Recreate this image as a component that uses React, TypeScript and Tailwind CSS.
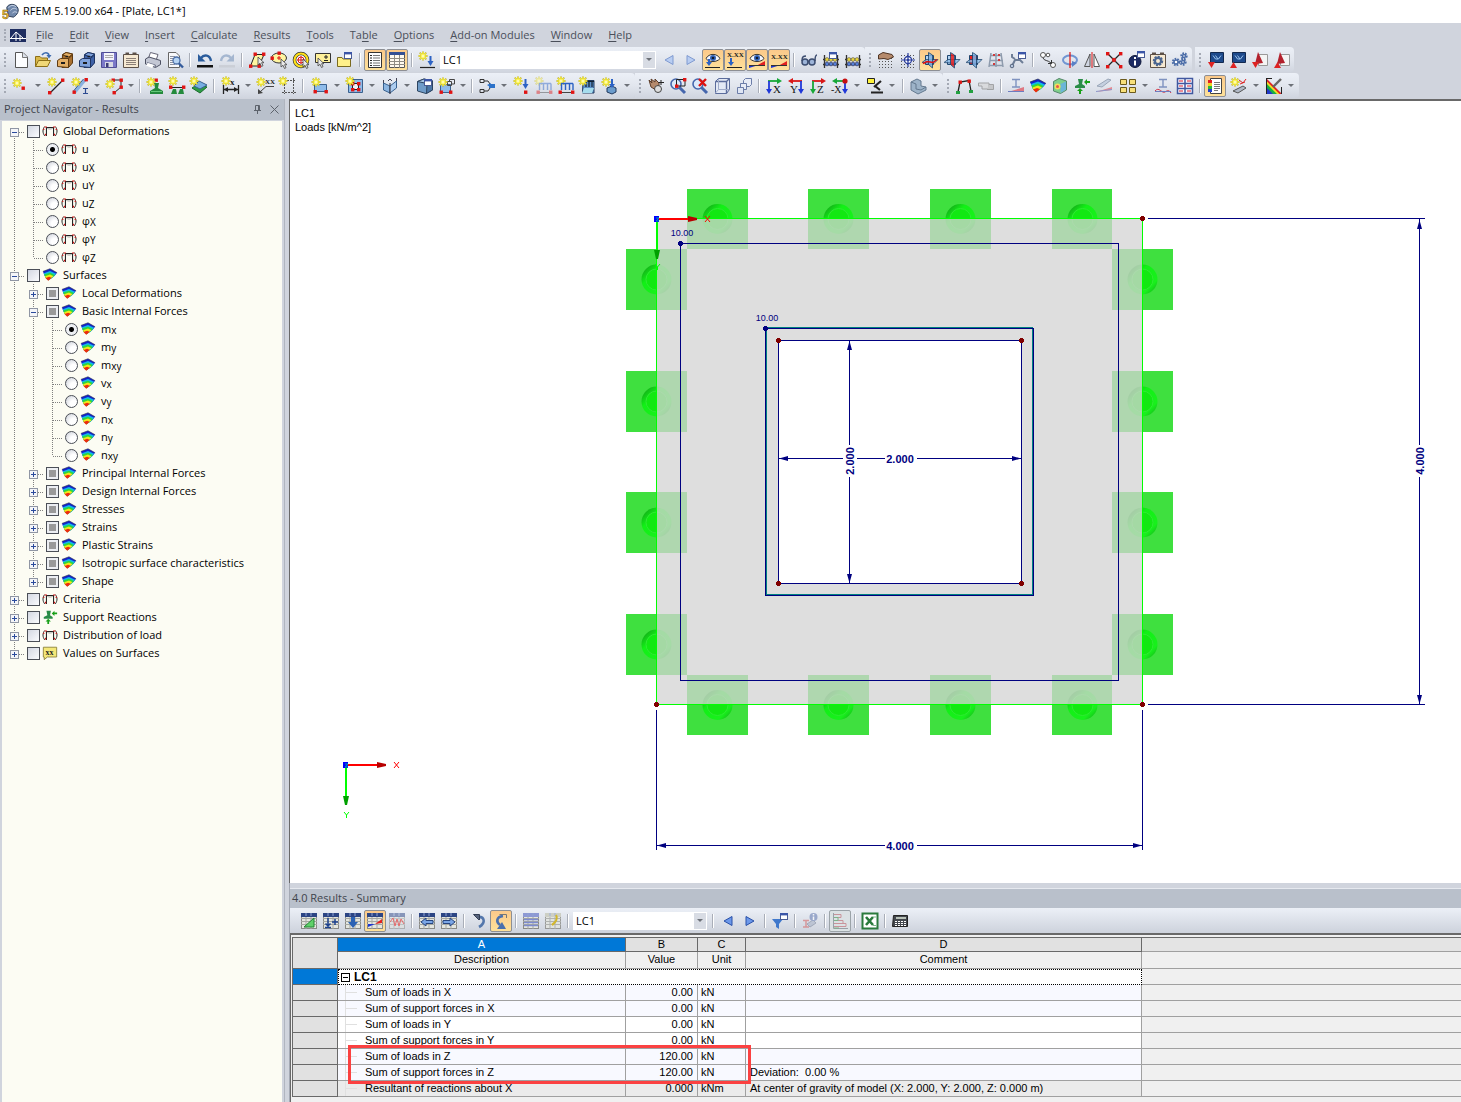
import React from "react";

type PProps = { d: string; f?: string; s?: string; w?: number; o?: number };
const P = ({ d, f = "none", s = "#333333", w = 1, o = 1 }: PProps) => (
  <path d={d} fill={f} stroke={s} strokeWidth={w} opacity={o} />
);
const F = ({ d, f = "#333333", o = 1 }: { d: string; f?: string; o?: number }) => <path d={d} fill={f} opacity={o} />;
const Star = ({ x = 5, y = 5 }: { x?: number; y?: number }) => (
  <g transform={`translate(${x} ${y})`}>
    <path d="M0-4.5V4.5M-4.5 0H4.5M-3.3-3.3 3.3 3.3M3.3-3.3-3.3 3.3" stroke="#c4b830" strokeWidth="1.8" />
    <path d="M0-4V4M-4 0H4M-2.6-2.6 2.6 2.6M2.6-2.6-2.6 2.6" stroke="#fff640" strokeWidth="1.2" />
    <circle r="1.6" fill="#fffbb0" />
  </g>
);
const Dot = ({ x, y }: { x: number; y: number }) => <rect x={x - 1.5} y={y - 1.5} width="3.4" height="3.4" fill="#e01414" />;
const Win = ({ x = 10, y = 1 }: { x?: number; y?: number }) => (
  <g transform={`translate(${x} ${y})`}>
    <rect x=".5" y=".5" width="7" height="6" fill="#fff" stroke="#4a5c94" />
    <path d="M0 1.2H8" stroke="#3b56a8" strokeWidth="2.4" />
  </g>
);
const Cursor = ({ x, y }: { x: number; y: number }) => (
  <path transform={`translate(${x} ${y})`} d="M0 0V8L2 6.3 3.5 9.5 5 8.7 3.6 5.7H6Z" fill="#e8e8e8" stroke="#444" strokeWidth=".8" />
);
const Grid = ({ head = "#2c4584", o = 1 }: { head?: string; o?: number }) => (
  <g opacity={o}>
    <rect x="1.5" y="1.5" width="15" height="15" fill="#e4e6e0" stroke="#8a8a86" />
    <path d="M1 6.5H17M1 9.5H17M1 12.5H17M6 3V17M11 3V17" stroke="#a5a7a2" fill="none" />
    <rect x="1" y="1" width="16" height="4" fill={head} />
    <path d="M6 1V4M11 1V4" stroke="#8fa3d3" />
  </g>
);
const Cabinet = ({ a, b, c }: { a: string; b: string; c: string }) => (
  <>
    <P d="M6.5 3.500 10 1.500 16.500 3V11L12 16.500H6Z" f={b} s={c} />
    <P d="M6.500 4 10 1.500 16.500 3 13 6Z" f={a} s={c} />
    <P d="M1.500 9.500 4.500 7.500H12.500V16.500L1.500 15.500Z" f={a} s={c} />
    <P d="M12.500 7.500 16.500 4V12L12.500 16.500Z" f={b} s={c} />
    <P d="M5 12H9" w={2} s="#1c1c1c" />
    <P d="M9.500 5.500H12" w={1.400} s="#1c1c1c" />
  </>
);
const Tiny = ({ x, y, t, c = "#222", size = 9 }: { x: number; y: number; t: string; c?: string; size?: number }) => (
  <text x={x} y={y} fontSize={size} fontWeight="700" fontFamily="Liberation Serif, serif" fill={c}>{t}</text>
);
const LoadFrame = ({ o = 1 }: { o?: number }) => (
  <g opacity={o}>
    <Star x={4} y={4} />
    <P d="M4.500 13V6.500H16M8.500 6.500V13M12.500 6.500V13M16 6.500V13" s="#2c62c4" w={1.400} />
    <P d="M2 15.500H17" s="#444" />
    <Dot x={3} y={15} />
    <Dot x={15.5} y={15} />
  </g>
);
const Surf = () => (
  <>
    <F d="M1 5 9 2 17 6.500 14 10 7 15 4 12Z" f="#1322cf" />
    <F d="M2 7 9 4.500 16 7.500 12 12 7 15 4 12Z" f="#12b9e6" />
    <F d="M2.500 8.500 9 6.500 14.500 9 11 12.500 7 15 4 12Z" f="#2fd83a" />
    <F d="M3.500 10.500 9 8.500 13 10.500 7 15 4 12Z" f="#f3e71a" />
    <F d="M4 12.500 8 11 11 12 7 15.500Z" f="#ee2a10" />
    <P d="M1 5 9 2 17 6.500" s="#26304a" w={0.7} />
  </>
);
const FrameIcon = () => (
  <>
    <P d="M5 14.500V5H13V14.500" w={1.200} s="#222" />
    <P d="M3 14.500C.5 11 .5 7 3 4M15 14.500C17.500 11 17.500 7 15 4" s="#222" w={1.100} />
    <P d="M3 4.500H5.500M12.500 4.500H15M2 6.500V8M16 6.500V8M4 12V14M14 12V14" s="#df1010" w={1.300} />
    <P d="M6 6C8 7 10 7 12 6" s="#999" />
  </>
);
const Box = ({ f = "#6f9cc9" }: { f?: string }) => (
  <>
    <P d="M1.500 4.500 8 2 16.500 4V13L10 16.500 1.500 14Z" f={f} s="#2d4561" />
    <P d="M1.500 4.500 8 2 16.500 4 11 6.500Z" f="#a9c8e6" s="#2d4561" />
    <P d="M11 6.500 16.500 4V13L10.500 16.500Z" f="#4a76a8" s="#2d4561" />
  </>
);
const Beads = () => (
  <>
    <P d="M2.500 4V17M15.500 4V17M1 8.500H17M1 13.500H17" s="#333" w={1.300} />
    {[5, 9, 13].map((x) => <circle key={x} cx={x} cy="8.500" r="1.900" fill="#e8d53d" stroke="#555" strokeWidth=".6" />)}
    {[5, 9, 13].map((x) => <circle key={x} cx={x} cy="13" r="1.900" fill="#5580d8" stroke="#335" strokeWidth=".6" />)}
  </>
);
const DotGrid = () => (
  <path d="M2 4.500H17M2 7.500H17M2 10.500H17M2 13.500H17M2 16.500H17" stroke="#555" strokeDasharray="1 2" fill="none" />
);
const Plane = ({ red }: { red: number }) => (
  <>
    <P d="M4.500 4.500H12.500V13.500H4.500Z" f={red === 3 ? "#e82020" : "#b4d4f2"} s="#1e466f" />
    <P d="M1 11.500 5 8.500H17L13 12.500Z" f="#8dbbe8" s="#1e466f" o={0.8} />
    <P d="M7.500 1.500 11.500 4V17L7.500 13.500Z" f={red === 2 ? "#e82020" : "#7db0e4"} s="#1e466f" o={0.85} />
    {red === 1 && <P d="M2 12.500 6 10.500 12 11.500 16 8.500" s="#e01010" w={1.400} />}
  </>
);
const Mag = () => (
  <>
    <circle cx="7" cy="7" r="5" fill="#dbe9fa" stroke="#4667ad" strokeWidth="1.600" />
    <P d="M10.500 10.500 16 16" s="#4667ad" w={3} />
  </>
);
const Axes = ({ t, h, v, flip }: { t: string; h: string; v: string; flip?: boolean }) => (
  <>
    <g transform={flip ? "translate(18 0) scale(-1 1)" : undefined}>
      <P d="M3 4H13" s={h} w={1.800} />
      <F d="M12 1 17 4 12 7Z" f={h} />
      <P d="M4 4V13" s={v} w={1.800} />
      <F d="M1 12 4 17 7 12Z" f={v} />
    </g>
    <text x={flip ? 3 : 8} y={16} fontSize="11" fontFamily="Liberation Serif, serif" fill="#111">{t}</text>
  </>
);
const Eye = () => (
  <>
    <P d="M2 7.500C5 2 13 2 16 7.500 13 11.500 5 11.500 2 7.500Z" f="#f4f7ff" s="#333" />
    <circle cx="9" cy="7" r="3" fill="#3263b8" />
    <circle cx="9" cy="7" r="1.300" fill="#101828" />
  </>
);
const Wedge = () => (
  <>
    <F d="M1 17V14L9 14.500Z" f="#2036d0" />
    <F d="M17 10V14L9 14.500Z" f="#e32020" />
    <P d="M1 14.500H17" s="#333" />
  </>
);
const Beam = ({ curve }: { curve?: boolean }) => (
  <>
    <P d="M5 2.500H13M9 2.500V10M5 10H13" s="#7f93c0" w={1.400} />
    {curve ? <P d="M1 14C5 9 8 17 11 15S15 13 17 16" s="#d43a4a" /> : <F d="M1 15 17 10V14Z" f="#df7882" />}
    <P d="M1 14.500H17" s="#6d7cc0" />
  </>
);

const icons: Record<string, React.ReactNode> = {
  defo: <FrameIcon />,
  new: <><P d="M3.500 1.500H11L15.500 6V16.500H3.500Z" f="#fcfdff" s="#555" /><P d="M10.500 1.500V6.500H15.500" f="#dde2ec" s="#777" /></>,
  open: <><P d="M1.500 15.500V5.500H6L7.500 7H13.500V9" f="#d9b84a" s="#8c6f18" /><P d="M1.500 15.500 4.500 9.500H16.500L13.500 15.500Z" f="#f0d878" s="#8c6f18" /><P d="M8 4C10 1 14 1 15 4" s="#3d6cb0" w={1.600} /><F d="M12.500 4H17.500L15 7.500Z" f="#3d6cb0" /></>,
  cab1: <Cabinet a="#e3ae65" b="#a9702f" c="#5e3a12" />,
  cab2: <Cabinet a="#7fa2dc" b="#3f62a8" c="#1f3563" />,
  save: <><P d="M1.500 1.500H16.500V16.500H1.500Z" f="#7a78c8" s="#504e96" /><F d="M4 2H14V9H4Z" f="#f4f4fb" /><P d="M5 4.500H13M5 6.500H13" s="#aaa" /><F d="M5 11H13V16H5Z" f="#d8d9e4" /><F d="M6 12H8.500V16H6Z" f="#3d3c78" /></>,
  notes: <><P d="M1.500 3.500H16.500V16.500H1.500Z" f="#f6e9d2" s="#5d5148" /><P d="M3.500 2.500H7M10.500 2.500H14.500" w={2} s="#5d5148" /><P d="M4 7.500H14M4 9.500H14M4 11.500H14M4 13.500H14" s="#8b7f77" /></>,
  print: <><P d="M4.500 7 6.500 1.500 14 3.500 12.500 8" f="#fff" s="#667" /><P d="M1.500 8 5 6 16.500 9.500V13.500L11.500 16.500 1.500 13Z" f="#c3c7d4" s="#4d5163" /><P d="M3 11.500 11.500 14V16" s="#777c90" /><F d="M4 12 10 14 8 17 2 14.500Z" f="#fff" /></>,
  preview: <><P d="M2.500 1.500H10L13.500 5V16.500H2.500Z" f="#f8f9fc" s="#666" /><P d="M4 5.500H9M4 7.500H8M4 9.500H7M4 11.500H7M4 13.500H9" s="#8d93a2" /><circle cx="10.500" cy="9.500" r="3.500" fill="#b5d3f3" stroke="#4a6ea8" strokeWidth="1.300" /><P d="M13 12.500 17 16.500" s="#345b9c" w={2.400} /></>,
  undo: <><P d="M5 7C8 3 14 3.500 15 10" s="#2a5c9c" w={2.400} /><F d="M2 3V10.500H9.500Z" f="#2a5c9c" /><F d="M1 14H17V16.500H1Z" f="#111" /></>,
  redo: <g opacity=".6"><P d="M13 7C10 3 4 3.500 3 10" s="#7c97bc" w={2.400} /><F d="M16 3V10.500H8.500Z" f="#7c97bc" /><F d="M1 14H17V16.500H1Z" f="#c3c6cd" /></g>,
  selpoly: <><P d="M2.500 15 7 3.500H16L11 15Z" f="#fff5a0" s="#222" /><Dot x={7} y={3} /><Dot x={15.5} y={3} /><Dot x={2.5} y={15} /><Dot x={11} y={15} /><Cursor x={10} y={6} /></>,
  selell: <><ellipse cx="9" cy="7" rx="7.500" ry="5" fill="#fff5a0" stroke="#333" /><P d="M7 7H11M9 5V9" s="#d11" /><Dot x={9} y={2} /><Dot x={2} y={7} /><Cursor x={11} y={8} /></>,
  selring: <><circle cx="9" cy="9" r="6.500" fill="#fff" stroke="#333" strokeWidth="3.600" /><circle cx="9" cy="9" r="6.500" fill="none" stroke="#ffe21a" strokeWidth="2.200" /><circle cx="9" cy="9" r="3" fill="#fff" stroke="#d11" /><P d="M9 5V13M5 9H13" s="#d11" /><Cursor x={11} y={8} /></>,
  selpm: <><P d="M1.500 2.500H16.500V11.500H1.500Z" f="#fff19a" s="#333" /><P d="M10 6H14M12 4V8M10 9.500H14" s="#222" /><Cursor x={4} y={7} /></>,
  folwin: <><P d="M1.500 15.500V6.500H6L7 8H14.500V15.500Z" f="#fff08a" s="#7a6a20" /><Win x={8} y={1} /></>,
  list: <><P d="M2.500 1.500H15.500V16.500H2.500Z" f="#fdfdfd" s="#333" /><P d="M4 4.500H6M4 7H6M4 9.500H6M4 12H6M4 14.500H6" s="#222" /><P d="M7 4.500H14M7 7H14M7 9.500H14M7 12H14M7 14.500H14" s="#777" /></>,
  table: <><P d="M1.500 1.500H16.500V16.500H1.500Z" f="#fffaf0" s="#555" /><F d="M1 1H17V4H1Z" f="#345094" /><P d="M1 7.500H17M1 10.500H17M1 13.500H17M6.500 4V17M11.500 4V17" s="#8f8b84" /></>,
  load: <><Star x={5} y={5} /><P d="M12.500 5V12" s="#2c62c4" w={2} /><F d="M9.500 10H15.500L12.500 15Z" f="#2c62c4" /><P d="M2 16.500H17" s="#222" w={1.200} /></>,
  left: <P d="M13 4.500V13.500L5 9Z" f="#b8cdf2" s="#7f9ad0" />,
  right: <P d="M5 4.500V13.500L13 9Z" f="#b8cdf2" s="#7f9ad0" />,
  leftB: <P d="M13 4.500V13.500L5 9Z" f="#6c98ea" s="#2950a8" />,
  rightB: <P d="M5 4.500V13.500L13 9Z" f="#6c98ea" s="#2950a8" />,
  eyeload: <><Eye /><P d="M5 8V12" s="#2c62c4" w={2} /><F d="M2 11H8L5 15Z" f="#2c62c4" /><P d="M1 16.500H16" s="#222" /></>,
  xload: <><Tiny x={1} y={6} t="X.XX" size={7} /><P d="M5 7V12" s="#2c62c4" w={2} /><F d="M2 11H8L5 15Z" f="#2c62c4" /><P d="M1 16.500H16" s="#222" /></>,
  eyewedge: <><Eye /><Wedge /></>,
  xwedge: <><Tiny x={1} y={8} t="X.XX" size={7} /><Wedge /></>,
  glasses: <><circle cx="5" cy="11" r="3" fill="#9db4d8" stroke="#3c4d70" strokeWidth="1.500" /><circle cx="12" cy="11" r="3" fill="#9db4d8" stroke="#3c4d70" strokeWidth="1.500" /><P d="M2 10C2 5 4 5 6 5M15 10C15 5 16 4 17 4M8 10.500H9" s="#3c4d70" w={1.500} /></>,
  beadwin: <><Beads /><Win x={7} y={1} /></>,
  beads: <Beads />,
  handgrid: <><DotGrid /><P d="M1.500 4 6 1.500 15 3.500 16.500 6 11 8.500 7 7.500 1.500 8Z" f="#b58a6c" s="#4f3525" /></>,
  snap: <><DotGrid /><circle cx="9" cy="9" r="3.500" fill="#fff" stroke="#2b3f9e" strokeWidth="1.300" /><P d="M9 2V16M2 9H16" s="#2b3f9e" w={1.200} /><circle cx="9" cy="9" r="1.300" fill="#2b3f9e" /></>,
  plane1: <Plane red={1} />,
  plane2: <Plane red={2} />,
  plane3: <Plane red={3} />,
  pgrid: <><P d="M4 2 2 16M9 2V16M14 2 16 16M3 4.500H15M2.500 9.500H16M2 14.500H16" s="#8e9bad" w={1.500} /><F d="M6 3H8V5H6ZM11 3H13V5H11ZM6 12H8V14H6ZM11 8H13V10H11Z" f="#d03a3a" /></>,
  wrench: <><Win x={9} y={1} /><P d="M3 15 6 9H11L14 12M3 3V6L6 8" s="#6d7d96" w={2} /><circle cx="3" cy="15" r="1.800" fill="#b6c5dd" stroke="#57667f" /></>,
  link: <><circle cx="4" cy="4" r="2.500" fill="#fff" stroke="#555" /><circle cx="9" cy="4" r="1.800" fill="#fff" stroke="#555" /><circle cx="14" cy="14" r="2.500" fill="#fff" stroke="#555" /><P d="M4 7C5 10 9 9 12 12M9 12.500H12.500V9" s="#333" /></>,
  rotate: <><ellipse cx="9" cy="9" rx="7" ry="4.500" fill="none" stroke="#7095d2" strokeWidth="2" /><P d="M9 1V17" s="#e01010" w={1.200} /><F d="M11 10 16 12 11 16Z" f="#5a80c6" /></>,
  mirror: <><P d="M7 3V15.500H1.500Z" f="#cfd5e2" s="#555" /><P d="M11 3V15.500H16.500Z" f="#fff" s="#555" /><P d="M9 1V17" s="#e01010" /></>,
  cross: <><P d="M2 2 16 16M16 2 2 16" s="#222" w={1.300} /><Dot x={2.5} y={2.5} /><Dot x={15.5} y={2.5} /><Dot x={2.5} y={15.5} /><Dot x={15.5} y={15.5} /><circle cx="9" cy="9" r="2.200" fill="#d92020" /></>,
  info: <><circle cx="8" cy="10.500" r="6" fill="#1b2a63" stroke="#0d1638" /><P d="M8 9.500V14.500M8 6V8" s="#fff" w={2} /><Win x={10} y={0} /></>,
  gearbox: <><P d="M1.500 3.500H16.500V16.500H1.500Z" f="#f6e9d2" s="#5d5148" /><P d="M3 2.500H7M11 2.500H15" w={2} s="#5d5148" /><circle cx="9" cy="10" r="4" fill="none" stroke="#4a6590" strokeWidth="2.400" strokeDasharray="2 1" /><circle cx="9" cy="10" r="3" fill="none" stroke="#4a6590" strokeWidth="2" /></>,
  gears: <>{[[5, 11, 3], [12, 11, 2.5], [13, 5, 2.5]].map(([x, y, r]) => <g key={`${x}-${y}`}><circle cx={x} cy={y} r={r} fill="none" stroke="#4b6da8" strokeWidth="2.400" strokeDasharray="1.500 1" /><circle cx={x} cy={y} r={r - 1} fill="#fff" stroke="#4b6da8" strokeWidth="1.500" /></g>)}</>,
  imp: <><P d="M3.500 1.500H16.500V11.500H3.500Z" f="#1d4a8c" s="#12294f" /><P d="M6 4.500 8.500 8H11.500L14 4.500M8.500 4.500 11 8" s="#9cc4ee" /><F d="M1 11H8L4.500 17Z" f="#dd2323" /></>,
  exp: <><P d="M3.500 1.500H16.500V11.500H3.500Z" f="#1d4a8c" s="#12294f" /><P d="M6 4.500 8.500 8H11.500L14 4.500M8.500 4.500 11 8" s="#9cc4ee" /><F d="M1 17H8L4.500 11Z" f="#dd2323" /></>,
  acad1: <><P d="M7.500 3.500H16.500V14.500H7.500Z" f="#f4f4f4" s="#999" /><F d="M4 13 7 1 12 12Z" f="#b3202c" /><F d="M1 11H8L4.500 17Z" f="#dd2323" /></>,
  acad2: <><P d="M7.500 3.500H16.500V14.500H7.500Z" f="#f4f4f4" s="#999" /><F d="M4 13 7 1 12 12Z" f="#b3202c" /><F d="M1 17H8L4.500 11Z" f="#dd2323" /></>,

  node: <><Star x={5} y={6} /><Dot x={11} y={11} /></>,
  line: <><P d="M3 16 16 3" s="#222" w={1.200} /><Dot x={2.5} y={15.5} /><Dot x={15.5} y={3} /><Star /></>,
  member: <><P d="M4 15 14 3" s="#8ab2e0" w={3} /><P d="M2.500 14 12.500 2" s="#355c90" /><Dot x={3} y={15} /><Dot x={15} y={2.5} /><Star /><P d="M12 11.500H17M14.500 11.500V16.500M12 16.500H17" s="#2c4a90" w={1.200} /></>,
  pline: <><P d="M7 3H15V10L8 16" s="#222" /><Dot x={7} y={3} /><Dot x={15} y={3} /><Dot x={15} y={10} /><Dot x={8} y={15.5} /><Star x={4} y={7} /></>,
  sup: <><Dot x={10} y={3} /><F d="M8 6H13L12 11 17 14V17H4V14L9 11Z" f="#248a3c" /><P d="M5 14.500H16" s="#63c878" /><Star /></>,
  lsup: <><P d="M2 10.500H17" s="#222" /><F d="M5 12H8L9 17H3ZM12 12H15L16 17H10Z" f="#248a3c" /><Dot x={2.5} y={10} /><Dot x={15.5} y={10} /><Star x={5} y={4} /></>,
  ssup: <><P d="M2 11 8 7 17 10 10 16Z" f="#2d9c46" s="#1a6a2c" /><P d="M4 9 9 4 17 8 10 12Z" f="#77aee2" s="#38618f" /><Star x={4} y={4} /></>,
  dim: <><P d="M1.500 8V17M16.500 8V17M2 12.500H16" s="#222" w={1.300} /><F d="M2 12.500 6 10V15ZM16 12.500 12 10V15Z" f="#222" /><Tiny x={8} y={8} t="x" /><Star x={4} y={4} /></>,
  note: <><P d="M3 15 9 9.500H17" s="#444" /><F d="M1 17V12L6 16Z" f="#444" /><Tiny x={8} y={7} t="XX" size={7} /><Star x={4} y={5} /></>,
  guide: <><path d="M5 3.500H17M3 15.500H17M5.500 1V17M14.500 1V17" stroke="#555" strokeDasharray="2 1" fill="none" /><Star x={4} y={4} /></>,
  surf: <><P d="M3.500 7.500H15.500V14.500H3.500Z" f="#8fbcea" s="#3a618e" /><Dot x={4} y={14.5} /><Dot x={15} y={14.5} /><Star x={5} y={5} /></>,
  opening: <><P d="M2.500 2.500H16.500V15.500H2.500Z" f="#8fbcea" s="#3a618e" /><P d="M6.500 6.500H12.500V12.500H6.500Z" f="#eef2f8" s="#222" /><Dot x={6.5} y={6.5} /><Dot x={12.5} y={6.5} /><Dot x={6.5} y={12.5} /><Dot x={12.5} y={12.5} /><Star x={4} y={4} /></>,
  inter: <><P d="M2.500 6 9 9V16L2.500 13Z" f="#8cb6e2" s="#38618f" /><P d="M9 9 15.500 4V11L9 16" f="#aecdf0" s="#38618f" /><P d="M9 6V17" s="#223" /><P d="M2.500 3V6M15.500 1V4M7 4 9 2 11 4" s="#445" /></>,
  solid: <><Box /><Win x={8} y={2} /></>,
  solids: <><P d="M2.500 7.500H12.500V15.500H2.500Z" f="#8fbcea" s="#3a618e" /><P d="M9.500 4.500H13.500V8.500H9.500ZM11.500 4V2.500H16.500V7H14" s="#444" /><Dot x={3} y={15} /><Dot x={12.5} y={15} /><Star x={5} y={5} /></>,
  combi: <><P d="M2 2.500H6V5.500H2ZM2 12.500H6V15.500H2ZM6 4H10L12 7M6 14H10L12 11" s="#333" /><F d="M9 8 13 6 12 10ZM11 7H17V11H11Z" f="#2c72c9" /></>,
  nload: <><Star x={5} y={4} /><P d="M12.500 2V9" s="#2c62c4" w={2} /><F d="M9.500 7H15.500L12.500 12Z" f="#2c62c4" /><Dot x={12.5} y={15} /></>,
  mload1: <LoadFrame o={0.45} />,
  mload2: <LoadFrame />,
  sload: <><P d="M4 3.500H15V16H3.500Z" f="#5c8fc8" s="#223a5e" /><P d="M7 4V10M10 4V10M13 4V10M5 4.500H15" s="#123" w={1.200} /><F d="M5 11H15L13 16H3Z" f="#a5dced" /><Star x={4} y={4} /></>,
  gload: <><P d="M6 11 11 9 15 11V15L11 17 6 15Z" f="#6b9ccc" s="#223a5e" /><P d="M11 2V8" s="#2c62c4" w={2} /><F d="M8 7H14L11 11Z" f="#2c62c4" /><Star x={5} y={5} /></>,

  pan: <><P d="M2 3 5 6 4 2 8 5 8 2 12 6V11L9 13 4 10Z" f="#b58a6c" s="#5c3d2a" /><circle cx="11" cy="12" r="3.500" fill="#ddd" stroke="#444" /><P d="M14 3V8M11.500 5.500H17" s="#222" /></>,
  zoomwin: <><Mag /><P d="M7.500 9V2.500H16V9Z" s="#222" /><Dot x={15.5} y={2.5} /><Dot x={7.5} y={9} /></>,
  zoomx: <><Mag /><P d="M8 2 15 9M15 2 8 9" s="#d11" w={2.400} /></>,
  cube: <><P d="M2.500 4.500 5.500 1.500H16.500V12.500L13.500 16.500H2.500Z" f="#e3e9f5" s="#5b6c9c" /><P d="M2.500 4.500H13.500V16.500M13.500 4.500 16.500 1.500" s="#5b6c9c" w={1.400} /><P d="M5.500 2V12.500H16M5.500 12.500 2.500 16" s="#a0acca" /></>,
  cubes: <><P d="M8.500 3.500 10.500 1.500H16.500V7.500L14.500 9.500H8.500Z" f="#e8ecf6" s="#6c7da8" /><P d="M5.500 6.500H11.500V12.500H5.500Z" f="#e8ecf6" s="#6c7da8" /><P d="M2.500 10.500H8.500V16.500H2.500Z" f="#dfe6f4" s="#6c7da8" /></>,
  ax: <Axes t="X" h="#18a838" v="#2038d8" />,
  ay: <Axes t="Y" h="#d81818" v="#2038d8" flip />,
  az: <Axes t="Z" h="#d81818" v="#18a838" />,
  amx: <><P d="M4 4H13" s="#18a838" w={1.800} /><F d="M6 1 1 4 6 7Z" f="#18a838" /><P d="M14 4V13" s="#2038d8" w={1.800} /><F d="M11 12 14 17 17 12Z" f="#2038d8" /><circle cx="14" cy="4" r="2.600" fill="#c81010" /><text x="0" y="16" fontSize="10" fontFamily="Liberation Serif, serif" fill="#111">-X</text></>,
  lamp: <><P d="M1.500 1.500H8.500V6.500H1.500Z" f="#fff33a" s="#222" /><P d="M8 10 15 4M9 9 14 13M5 15.500H17" s="#222" w={2.200} /></>,
  iso: <><P d="M2 5 8 2 12 4V9L17 10V13L9 17 2 13Z" f="#9db3c8" s="#64798f" /><P d="M2 5 7 7V12L12 13 17 10" s="#64798f" /></>,
  frame: <><P d="M3 15 5 5 14 3.500 16 14" s="#222" w={1.300} /><Dot x={5} y={5} /><Dot x={14} y={4} /><F d="M1 14H5V17H1ZM14 13H18V16H14Z" f="#22a040" /></>,
  conn: <g opacity=".7"><P d="M1.500 6H12V12H5V9H1.500Z" f="#d6d6d6" s="#888" /><P d="M12 7.500H16.500V12.500H10" f="#bbb" s="#888" /></g>,
  beam1: <Beam />,
  beam2: <Beam curve />,
  iso2: <Surf />,
  rcube: <><P d="M2.500 4.500 8 1.500 15.500 4V13L9.500 16.500 2.500 14Z" f="#7fcf8c" s="#55876a" /><F d="M9.500 7 15 4.500V12.500L9.500 16Z" f="#6bb6d8" /><circle cx="6.500" cy="9.500" r="3" fill="#f1de5a" /><circle cx="6.500" cy="9.500" r="1.500" fill="#e8564a" /></>,
  react: <><F d="M5 2H10L9 7 12 9V11H2V9L6 7Z" f="#2a8c48" /><F d="M11 5 14 2V4H17V6H14V8ZM6 17V14H4L7 11 10 14H8V17Z" f="#18a018" /></>,
  memb: <><P d="M2 9 13 2 16 3 7 10Z" f="#c5d0e0" s="#9aa6b8" /><F d="M1 15 17 10V13Z" f="#e58a92" /><P d="M1 14.500 17 12.500" s="#8c98cc" /></>,
  tags: <>{[[1, 2], [10, 2], [1, 10], [10, 10]].map(([x, y]) => <path key={`${x}-${y}`} d={`M${x + 0.5} ${y + 0.5}H${x + 6.5}V${y + 5.5}H${x + 0.5}Z`} fill="#f8e07a" stroke="#6b5a1c" />)}</>,
  multi: <><P d="M1.500 1.500H16.500V16.500H1.500ZM9 1V17M1 6.500H17M1 11.500H17" f="#f7f9ff" s="#4158a0" w={1.500} /><P d="M3 4H7M11 4H15M3 9H7M11 9H15M3 14H7M11 14H15" s="#d23" /></>,
  panel: <><P d="M4.500 1.500H15.500V16.500H4.500Z" f="#fff" s="#444" /><F d="M2 3H6V6H2Z" f="#e02020" /><F d="M2 6H6V9H2Z" f="#f0d020" /><F d="M2 9H6V12H2Z" f="#28b83a" /><F d="M2 12H6V15H2Z" f="#2040d0" /><P d="M8 5.500H14M8 7.500H14M8 9.500H14M8 11.500H14M8 13.500H12" s="#777" /></>,
  edit: <><P d="M3 14 13 9 16 11 8 16Z" f="#b0b8c6" s="#555" /><P d="M9 3 13 6 16 2M10 7 15 5" s="#d22" /><Star x={5} y={5} /></>,
  rain: <><F d="M1 9V17H9Z" f="#2038c8" /><F d="M1 5.500V10L8 17H12.500Z" f="#18b040" /><F d="M1 3V6L12 17H15.500Z" f="#f2e020" /><F d="M1 1V3.500L14.500 17H17Z" f="#e02020" /><P d="M1.500 1V17M16.500 17V10M1 1.500H7" s="#222" /><P d="M16 2 8 10" s="#666" w={2.400} /></>,

  t1: <><Grid /><P d="M4 15 14 6V15Z" f="#5fd06a" s="#238434" /></>,
  t2: <><Grid /><P d="M6 6V14M3.500 11.500 6 14 8.500 11.500M3 15.500H9M10 10H16M13 7V13" s="#1d418e" w={1.500} /></>,
  t3: <><Grid /><F d="M7 5H11V10H14L9 16 4 10H7Z" f="#2c62b4" /></>,
  t4: <><Grid /><F d="M2 15V12L9 12Z" f="#2036d0" /><F d="M16 7V11L9 12Z" f="#e32020" /></>,
  t5: <><Grid o={0.5} /><P d="M2 10 5 6 7 14 9 7 11 14 13 7 16 12" s="#e46a6a" /></>,
  prevt: <><Grid /><P d="M3 10 8 6V8.500H15V11.500H8V14Z" f="#7ba6e6" s="#27457f" /></>,
  nextt: <><Grid /><P d="M15 10 10 6V8.500H3V11.500H10V14Z" f="#7ba6e6" s="#27457f" /></>,
  rot1: <><P d="M7 5C15 4 16 11 9 15" s="#5477ac" w={2.600} /><P d="M3.500 2.500H9.500V8M3.500 2.500 9 8" f="#56637c" s="#333e55" /></>,
  rot2: <><P d="M11 4C4 5 4 10 8 13" s="#4b70ad" w={2.600} /><F d="M5 17H14L10 10Z" f="#4b70ad" /><P d="M7.500 2.500H14.500V6" s="#777" /></>,
  gridt: <><Grid head="#8d99d4" /><P d="M2 7.500H16M2 10.500H16M2 13.500H16" s="#7d8bd0" w={1.300} /></>,
  gridy: <><Grid head="#c8cabb" o={0.8} /><P d="M12 3C14 6 12 10 8 13" s="#d2b72c" w={2.200} /></>,
  filter: <><F d="M1 7H12L8 12V17L5 15V12Z" f="#3f78cc" /><Win x={9} y={1} /></>,
  infos: <g opacity=".6"><P d="M2 8.500H8M5 8.500V15M2 15H8" s="#d46a6a" w={1.500} /><P d="M6 12 12 8 15 11 9 15Z" f="#aab4c8" s="#7d879b" /><circle cx="12.500" cy="5" r="4" fill="#6a7fb4" /><P d="M12.500 4.500V8M12.500 2V3.500" s="#fff" w={1.500} /></g>,
  bars: <><P d="M2.500 1V16.500H17" s="#9aa0a6" /><P d="M3 2.500H10V5.500H3M3 8.500H12V11.500H3M3 11.500H15V14.500H3" s="#c9949a" /><P d="M3 5.500H7V8.500H3M3 16H8" s="#7fb48a" /></>,
  excel: <><P d="M1.500 1.500H16.500V16.500H1.500Z" f="#fff" s="#2a7a3c" w={2} /><P d="M5 5 12 13M12 5 5 13" s="#2a7a3c" w={2.600} /><P d="M12 13.500H15M12 5H15" s="#7bb488" /></>,
  calc: <><P d="M2.500 3.500H16.500V14.500H1.500Z" f="#43474d" s="#222" /><F d="M5 5H15V7H5Z" f="#b9c2b8" /><path d="M4 9.500H16M4 11.500H16M4 13.500H16" stroke="#fff" strokeDasharray="2 1" fill="none" /></>,
  values: <><P d="M1.500 2.500H16.500V13.500H6L2.500 16.500V13.500H1.500Z" f="#f4e878" s="#8c8238" /><Tiny x={4} y={11} t="xx" /></>,
};

const Icon = ({ n, size = "w-[18px] h-[18px]" }: { n: string; size?: string }) => (
  <svg viewBox="0 0 18 18" className={`${size} shrink-0 overflow-visible`} aria-hidden="true">{icons[n]}</svg>
);

/* Toolbar tokens: "|" separator, "v" drop arrow, "V" narrow drop arrow, "." spacer, "*name" pressed, "~name" pressed gray. */
const Tools = ({ items }: { items: string }) => (
  <>
    {items.split(" ").map((t, i) => {
      if (t === "|")
        return <span key={i} className="flex w-2 shrink-0 justify-center"><span className="h-[14px] w-[2px] border-l border-[#a9aeb8] bg-white" /></span>;
      if (t === "v" || t === "V")
        return (
          <button key={i} aria-label="More" className={t === "v" ? "w-[13px] shrink-0 pl-[3px]" : "w-[10px] shrink-0 pl-[2px]"}>
            <span className="block h-0 w-0 border-x-[3px] border-t-[3px] border-x-transparent border-t-[#6d7178]" />
          </button>
        );
      if (t === ".") return <span key={i} className="w-[2px] shrink-0" />;
      const on = t[0] === "*";
      const gray = t[0] === "~";
      const name = on || gray ? t.slice(1) : t;
      return (
        <button
          key={i}
          aria-label={name}
          aria-pressed={on || gray}
          className={
            "flex h-[22px] w-[22px] shrink-0 items-center justify-center rounded-[2px] " +
            (on ? "border border-[#8d8f94] bg-linear-to-b from-[#fbc98a] to-[#fee19a]" : gray ? "border border-[#9ba3a8] bg-[#dbe2e4]" : "")
          }
        >
          <Icon n={name} />
        </button>
      );
    })}
  </>
);

const Segment = ({ children }: { children: React.ReactNode }) => (
  <div className="flex h-[25px] shrink-0 items-center rounded-r-[4px] bg-linear-to-b from-[#ecf0f7] via-[#e2e6ee] to-[#d0d5df] pr-px">
    <span className="mr-1 ml-1 h-[14px] w-[2px] border-l-2 border-dotted border-[#a4a9b4]" />
    {children}
  </div>
);

const Combo = ({ label, width }: { label: string; width: string }) => (
  <div className={`relative h-[18px] shrink-0 ${width}`}>
    <select aria-label={label} className="h-full w-full appearance-none bg-white pl-[3px] text-[11px] leading-[18px] text-black">
      <option>LC1</option>
    </select>
    <span className="pointer-events-none absolute inset-y-0 right-0 flex w-[14px] items-center justify-center border border-white bg-[#d8dce4]">
      <span className="h-0 w-0 border-x-[3px] border-t-[3px] border-x-transparent border-t-[#6d7178]" />
    </span>
  </div>
);

const menus: [string, string, string][] = [
  ["", "F", "ile"], ["", "E", "dit"], ["", "V", "iew"], ["", "I", "nsert"], ["", "C", "alculate"], ["", "R", "esults"],
  ["", "T", "ools"], ["Ta", "b", "le"], ["", "O", "ptions"], ["", "A", "dd-on Modules"], ["", "W", "indow"], ["", "H", "elp"],
];

type Row = { level: number; kind: "check" | "mixed" | "radio"; icon: string; text: string; sub?: string; open?: boolean; on?: boolean; group?: string; last?: boolean };
const leaf = (level: number, group: string, icon: string, text: string, sub: string, on = false, last = false): Row => ({
  level, kind: "radio", group, icon, text, sub, on, last,
});
const rows: Row[] = [
  { level: 0, kind: "check", icon: "defo", text: "Global Deformations", open: true },
  leaf(1, "defo", "defo", "u", "", true),
  leaf(1, "defo", "defo", "u", "X"),
  leaf(1, "defo", "defo", "u", "Y"),
  leaf(1, "defo", "defo", "u", "Z"),
  leaf(1, "defo", "defo", "φ", "X"),
  leaf(1, "defo", "defo", "φ", "Y"),
  leaf(1, "defo", "defo", "φ", "Z", false, true),
  { level: 0, kind: "check", icon: "iso2", text: "Surfaces", open: true },
  { level: 1, kind: "mixed", icon: "iso2", text: "Local Deformations" },
  { level: 1, kind: "mixed", icon: "iso2", text: "Basic Internal Forces", open: true },
  leaf(2, "force", "iso2", "m", "x", true),
  leaf(2, "force", "iso2", "m", "y"),
  leaf(2, "force", "iso2", "m", "xy"),
  leaf(2, "force", "iso2", "v", "x"),
  leaf(2, "force", "iso2", "v", "y"),
  leaf(2, "force", "iso2", "n", "x"),
  leaf(2, "force", "iso2", "n", "y"),
  leaf(2, "force", "iso2", "n", "xy", false, true),
  { level: 1, kind: "mixed", icon: "iso2", text: "Principal Internal Forces" },
  { level: 1, kind: "mixed", icon: "iso2", text: "Design Internal Forces" },
  { level: 1, kind: "mixed", icon: "iso2", text: "Stresses" },
  { level: 1, kind: "mixed", icon: "iso2", text: "Strains" },
  { level: 1, kind: "mixed", icon: "iso2", text: "Plastic Strains" },
  { level: 1, kind: "mixed", icon: "iso2", text: "Isotropic surface characteristics" },
  { level: 1, kind: "mixed", icon: "iso2", text: "Shape", last: true },
  { level: 0, kind: "check", icon: "defo", text: "Criteria" },
  { level: 0, kind: "check", icon: "react", text: "Support Reactions" },
  { level: 0, kind: "check", icon: "defo", text: "Distribution of load" },
  { level: 0, kind: "check", icon: "values", text: "Values on Surfaces", last: true },
];

const Guide = ({ up = true, down, arm, box, open }: { up?: boolean; down: boolean; arm?: boolean; box?: boolean; open?: boolean }) => (
  <svg viewBox="0 0 19 18" className="h-[18px] w-[19px] shrink-0" aria-hidden="true" shapeRendering="crispEdges">
    <g stroke="#808080" strokeDasharray="1 1" fill="none">
      {up && <path d="M9.500 0V10" />}
      {down && <path d="M9.500 10V18" />}
      {arm && <path d="M10 10.500H20" />}
    </g>
    {box && (
      <>
        <rect x="5.500" y="6.500" width="8" height="8" fill="#f4f5f8" stroke="#9096a4" />
        <path d={open ? "M7 10.500H12" : "M7 10.500H12M9.500 8V13"} stroke="#2a4a9c" fill="none" />
      </>
    )}
  </svg>
);

const TreeRow = ({ r, i }: { r: Row; i: number }) => {
  const cells = [];
  for (let l = 0; l < r.level; l++) {
    const more = rows.slice(i + 1).some((n, k, rest) => n.level === l && rest.slice(0, k).every((q) => q.level > l));
    cells.push(<Guide key={l} up={more} down={more} />);
  }
  const id = `node-${i}`;
  return (
    <li className="flex h-[18px] items-center">
      {cells}
      {r.kind === "radio" ? (
        <Guide down={!r.last} arm />
      ) : (
        <button aria-label={r.open ? "Collapse" : "Expand"} className="shrink-0"><Guide up={i > 0} down={!r.last} arm box open={r.open} /></button>
      )}
      {r.kind === "radio" ? (
        <input id={id} type="radio" name={r.group} defaultChecked={r.on} className="ml-[3px] h-[13px] w-[13px] shrink-0 appearance-none rounded-full border border-[#4b4f57] bg-[radial-gradient(circle_at_70%_70%,#ffffff_30%,#c8ccd6)] checked:bg-[radial-gradient(circle,#000000_2px,#eef0f4_3px)]" />
      ) : (
        <input id={id} type="checkbox" defaultChecked={r.kind === "mixed"} className="ml-[3px] h-[13px] w-[13px] shrink-0 appearance-none border border-[#4b4f57] bg-linear-to-br from-[#d4d8e2] to-[#fafbfd] bg-clip-padding checked:bg-[#999999] checked:bg-none checked:shadow-[inset_0_0_0_2px_#eceef2]" />
      )}
      <label htmlFor={id} className="flex items-center">
        <span className="mr-[5px] ml-[2px] flex"><Icon n={r.icon} size="h-4 w-4" /></span>
        <span className="whitespace-nowrap">{r.text}{r.sub && <span className="relative top-px text-[10px]">{r.sub}</span>}</span>
      </label>
    </li>
  );
};

const slots = [249, 371, 492, 614];
const slotsX = [687, 808, 930, 1052];
const supports = [
  ...slotsX.map((x) => [x, 189, x + 30.5, 219]),
  ...slotsX.map((x) => [x, 675, x + 30.5, 705]),
  ...slots.map((y) => [626, y, 656.5, y + 30.5]),
  ...slots.map((y) => [1112, y, 1142.5, y + 30.5]),
];
const NodeDot = ({ x, y, c = "#800000" }: { x: number; y: number; c?: string }) => (
  <path d={`M${x - 2} ${y - 1}H${x - 1}V${y - 2}H${x + 2}V${y - 1}H${x + 3}V${y + 2}H${x + 2}V${y + 3}H${x - 1}V${y + 2}H${x - 2}Z`} fill={c} />
);
const AxisCross = ({ x, y, yLabel }: { x: number; y: number; yLabel: number }) => (
  <g transform={`translate(${x} ${y})`}>
    <rect x="0" y="-1" width="32" height="2" fill="#ff0000" />
    <path d="M31-3V3L40 1V-1Z" fill="#b80000" />
    <rect x="-1" y="0" width="2" height="32" fill="#00ff00" />
    <path d="M-3 31H3L1 40H-1Z" fill="#00a000" />
    <rect x="-3" y="-3" width="5" height="6" fill="#0000ff" />
    <path d="M-1-1H2L-1 2H2" stroke="#00a0a0" fill="none" />
    <path d="M48-3 53 3M53-3 48 3" stroke="#ff0000" fill="none" />
    <path d={`M-2 ${yLabel - 3}L0.500 ${yLabel}L3 ${yLabel - 3}M0.500 ${yLabel}V${yLabel + 3}`} stroke="#00ff00" fill="none" />
  </g>
);

const Model = () => (
  <svg viewBox="290 101 1171 782" className="block w-full" role="img" aria-label="Plate model with loads and dimensions" fontFamily="Liberation Sans, Arial, sans-serif" fontSize="11">
    <defs>
      <linearGradient id="ring" x1="0" y1="0" x2="1" y2="1">
        <stop offset="0" stopColor="#14901a" />
        <stop offset=".35" stopColor="#12f016" />
        <stop offset=".75" stopColor="#18f01c" />
        <stop offset="1" stopColor="#14a01a" />
      </linearGradient>
    </defs>
    <text x="295" y="117">LC1</text>
    <text x="295" y="131">Loads [kN/m^2]</text>
    {supports.map(([x, y, cx, cy]) => (
      <g key={`${x}-${y}`}>
        <rect x={x} y={y} width={x === 1052 ? 60 : 61} height={y === 189 || y === 675 ? 60 : 61} fill="#3fe03f" />
        <circle cx={cx} cy={cy} r="15" fill="url(#ring)" />
        <circle cx={cx} cy={cy} r="10.500" fill="#12e812" stroke="#30ea33" />
      </g>
    ))}
    <path d="M656 218H1143V705H656ZM778 340V583H1021V340Z" fillRule="evenodd" fill="#d3d3d3" fillOpacity=".755" />
    <g fill="none" shapeRendering="crispEdges">
      <rect x="656.500" y="218.500" width="486" height="486" stroke="#00ff00" />
      <rect x="680.500" y="243.500" width="438" height="437" stroke="#000080" />
      <rect x="766.500" y="327.500" width="266" height="267" stroke="#008080" />
      <rect x="765.500" y="328.500" width="268" height="267" stroke="#000080" />
      <rect x="778.500" y="340.500" width="243" height="243" stroke="#000080" />
      <path
        stroke="#000080"
        d="M1148 218.500H1425M1148 704.500H1425M1419.500 219V445M1419.500 477V704M656.500 710V850M1142.500 710V850M657 845.500H885M917 845.500H1142M779 458.500H843M857 458.500H885M917 458.500H1021M849.500 341V445M849.500 477V583"
      />
    </g>
    <path
      fill="#000080"
      d="M1419.500 220 1422 229H1417ZM1419.500 704 1422 695H1417ZM849.500 341 852 350H847ZM849.500 583 852 574H847ZM657 845.500 666 843V848ZM1142 845.500 1133 843V848ZM779 458.500 788 456V461ZM1021 458.500 1012 456V461Z"
    />
    {[[1142, 218], [656, 704], [1142, 704], [778, 340], [1021, 340], [778, 583], [1021, 583]].map(([x, y]) => <NodeDot key={`${x}-${y}`} x={x} y={y} />)}
    <NodeDot x={680} y={243} c="#000080" />
    <NodeDot x={765} y={328} c="#000080" />
    <AxisCross x={657} y={219} yLabel={48} />
    <AxisCross x={346} y={765} yLabel={50} />
    <g fill="#000080" textAnchor="middle">
      <text x="682" y="236" fontSize="9">10.00</text>
      <text x="767" y="321" fontSize="9">10.00</text>
      <g fontWeight="700">
        <text x="900" y="850">4.000</text>
        <text x="900" y="463">2.000</text>
        <text transform="translate(1424 461) rotate(-90)">4.000</text>
        <text transform="translate(854 461) rotate(-90)">2.000</text>
      </g>
    </g>
  </svg>
);

const results: [string, string, string, string, string][] = [
  ["Sum of loads in X", "0.00", "kN", "", "bg-[#f8f9ff]"],
  ["Sum of support forces in X", "0.00", "kN", "", "bg-[#f8f9ff]"],
  ["Sum of loads in Y", "0.00", "kN", "", "bg-white"],
  ["Sum of support forces in Y", "0.00", "kN", "", "bg-white"],
  ["Sum of loads in Z", "120.00", "kN", "", "bg-[#f8f9ff]"],
  ["Sum of support forces in Z", "120.00", "kN", "Deviation:  0.00 %", "bg-[#f8f9ff]"],
  ["Resultant of reactions about X", "0.000", "kNm", "At center of gravity of model (X: 2.000, Y: 2.000, Z: 0.000 m)", "bg-[#ebebeb]"],
];
const line = "border-r border-b border-[#a0a0a0]";
const knob = "border-r border-b border-[#696969] bg-[#e1e1e1] font-normal";

const ResultsTable = () => (
  <div className="relative mt-[2px] ml-px">
    <table className="w-full table-fixed border-separate border-spacing-0 border-t border-l border-[#696969] font-['Liberation_Sans',Arial,sans-serif] text-[11px] leading-[13px] text-black">
      <colgroup>
        <col className="w-[45px]" /><col className="w-[288px]" /><col className="w-[72px]" /><col className="w-[48px]" /><col className="w-[396px]" /><col />
      </colgroup>
      <thead>
        <tr className="h-[14px]">
          <th rowSpan={2} className={knob} aria-label="Row" />
          <th className="border-r border-b border-[#696969] bg-[#0078d7] p-0 font-normal text-white">A</th>
          <th className={`${knob} p-0`}>B</th>
          <th className={`${knob} p-0`}>C</th>
          <th className={`${knob} p-0`}>D</th>
          <th className="border-b border-[#a0a0a0] bg-[#e4e4e4] p-0" />
        </tr>
        <tr className="h-[17px] bg-[#f0f0f0]">
          {["Description", "Value", "Unit", "Comment"].map((h) => <th key={h} className={`${line} p-0 pb-[2px] font-normal`}>{h}</th>)}
          <th className="border-b border-[#a0a0a0] p-0" />
        </tr>
      </thead>
      <tbody>
        <tr className="h-4">
          <th className="border-r border-b border-[#696969] bg-[#0078d7]" aria-label="Selected row" />
          <td colSpan={4} className="border border-dotted border-black bg-white p-0 font-bold">
            <span className="flex h-[13px] items-center gap-1 pl-[2px] text-[12px] leading-[13px]">
              <button aria-label="Collapse LC1" className="flex h-[9px] w-[9px] items-center justify-center border border-black"><span className="h-px w-[5px] bg-black" /></button>
              LC1
            </span>
          </td>
          <td className="border-b border-[#a0a0a0] bg-[#f0f0f0] p-0" />
        </tr>
        {results.map(([name, value, unit, comment, bg]) => (
          <tr key={name} className={`h-4 ${bg}`}>
            <th className={`${knob} p-0`} aria-label="Row" />
            <td className={`${line} p-0`}>
              <span className="flex h-[15px] items-center whitespace-nowrap">
                <span className="mr-2 ml-[7px] flex h-[15px] w-[12px] items-center border-l border-[#e0e0e0]"><span className="h-px w-full bg-[#e0e0e0]" /></span>
                {name}
              </span>
            </td>
            <td className={`${line} p-0 pr-1 text-right`}>{value}</td>
            <td className={`${line} p-0 pl-[3px]`}>{unit}</td>
            <td className={`${line} p-0 pl-1 whitespace-pre`}>{comment}</td>
            <td className="border-b border-[#a0a0a0] bg-[#f0f0f0] p-0" />
          </tr>
        ))}
      </tbody>
    </table>
    <div className="pointer-events-none absolute top-[108px] left-[56px] h-[39px] w-[403px] border-[3px] border-[#fb4141]" />
  </div>
);

export default function App() {
  return (
    <div className="flex min-h-screen flex-col overflow-hidden bg-[#d0d4dd] font-['Open_Sans','Noto_Sans',sans-serif] text-[11px] text-black">
      <header className="flex h-[23px] shrink-0 items-center bg-white pl-[2px]">
        <svg viewBox="0 0 18 18" className="mr-[4px] h-[17px] w-[17px]" aria-hidden="true">
          <path d="M5 5C6 1 13 0 16 4S16 13 12 15L7 14Z" fill="#6f87aa" stroke="#2b3b55" />
          <path d="M7 5C9 2 12 2 15 4M9 8C11 5 14 5 16 7M11 11C12 9 14 9 16 10" stroke="#c9d5e8" fill="none" />
          <text x="0" y="17" fontSize="13" fontWeight="700" fill="#f0bf35" stroke="#6e5210" strokeWidth=".5" fontFamily="Liberation Sans, sans-serif">5</text>
        </svg>
        <h1>RFEM 5.19.00 x64 - [Plate, LC1*]</h1>
      </header>
      <nav className="flex h-6 shrink-0 items-center text-[#4a4f5a]" aria-label="Main menu">
        <span className="ml-1 h-[12px] border-l-2 border-dotted border-[#a4a9b4]" />
        <svg viewBox="0 0 16 13" className="mr-[2px] ml-1 h-[13px] w-4" aria-hidden="true">
          <rect width="16" height="13" fill="#1e2d60" />
          <path d="M0 9.500H16M1 9 6 3V12M6 3 13 9M10 6V12" stroke="#fff" fill="none" />
        </svg>
        {menus.map(([a, b, c]) => (
          <button key={a + b + c} className="px-2 leading-[18px]">{a}<span className="underline underline-offset-2">{b}</span>{c}</button>
        ))}
      </nav>
      <div className="flex h-[26px] shrink-0 items-start">
        <Segment>
          <Tools items="new open cab1 cab2 save notes print preview | undo redo | selpoly selell selring selpm folwin | *list *table | load" />
          <span className="w-[2px]" />
          <Combo label="Load case" width="w-[216px]" />
          <Tools items=". left right *eyeload *xload *eyewedge *xwedge | glasses beadwin beads" />
        </Segment>
        <Segment><Tools items="handgrid snap *plane1 plane2 plane3 pgrid wrench | link rotate mirror cross info gearbox gears" /></Segment>
        <span className="w-[3px]" />
        <Segment><Tools items="imp exp acad1 acad2" /></Segment>
      </div>
      <div className="flex h-[26px] shrink-0 items-start">
        <Segment><Tools items="node v line . member v pline V | sup lsup ssup | . dim v note guide | . surf v opening v inter v solid solids V | combi v nload mload1 mload2 sload gload v" /></Segment>
        <Segment><Tools items="pan zoomwin zoomx cube cubes | ax ay az amx v lamp v | iso v" /></Segment>
        <Segment><Tools items="frame conn | beam1 iso2 rcube react memb . tags v beam2 multi | *panel . edit v rain v" /></Segment>
      </div>
      <div className="flex flex-1">
        <aside className="flex w-[285px] shrink-0 flex-col border-r border-[#b0b5bf]">
          <div className="flex h-[21px] items-center bg-[#b9c0cb] pr-[5px] pl-1 text-[#3f444c]">
            <h2 className="flex-1">Project Navigator - Results</h2>
            <button aria-label="Pin" className="mr-2">
              <svg viewBox="0 0 9 9" className="h-[9px] w-[9px]"><path d="M2.500 5V.5H6.500V5M1 5.500H8M4.500 6V9M5.500 1V5" stroke="#5d636c" fill="none" /></svg>
            </button>
            <button aria-label="Close">
              <svg viewBox="0 0 9 9" className="h-[9px] w-[9px]"><path d="M.5.5 8.500 8.500M8.500.5.5 8.500" stroke="#5d636c" fill="none" /></svg>
            </button>
          </div>
          <ul className="mx-[2px] mt-px flex-1 bg-[#fcfcf3] pt-px pl-[3px]">
            {rows.map((r, i) => <TreeRow key={i} r={r} i={i} />)}
          </ul>
        </aside>
        <main className="ml-1 flex min-w-0 flex-1 flex-col">
          <div className="flex-1 overflow-hidden border-t-2 border-l border-[#696969] bg-white">
            <Model />
          </div>
          <section className="border-l border-[#a4a9b4]">
            <div className="mt-[5px] flex h-5 items-center border-t border-[#e6e9ef] bg-[#b9c0cb] pl-[2px] text-[#3f444c]"><h2>4.0 Results - Summary</h2></div>
            <div className="flex h-[25px] items-center bg-linear-to-b from-[#ecf0f7] to-[#cdd2dc] pl-2">
              <Tools items="t1 t2 t3 *t4 t5 | prevt nextt | rot1 *rot2 | gridt gridy |" />
              <span className="w-px" />
              <Combo label="Results load case" width="w-[134px]" />
              <Tools items=". | leftB rightB | filter | infos | ~bars | excel | calc" />
            </div>
            <div className="border-t-2 border-l border-[#696969] bg-[#f0f0f0] pb-[6px]"><ResultsTable /></div>
          </section>
        </main>
      </div>
    </div>
  );
}
